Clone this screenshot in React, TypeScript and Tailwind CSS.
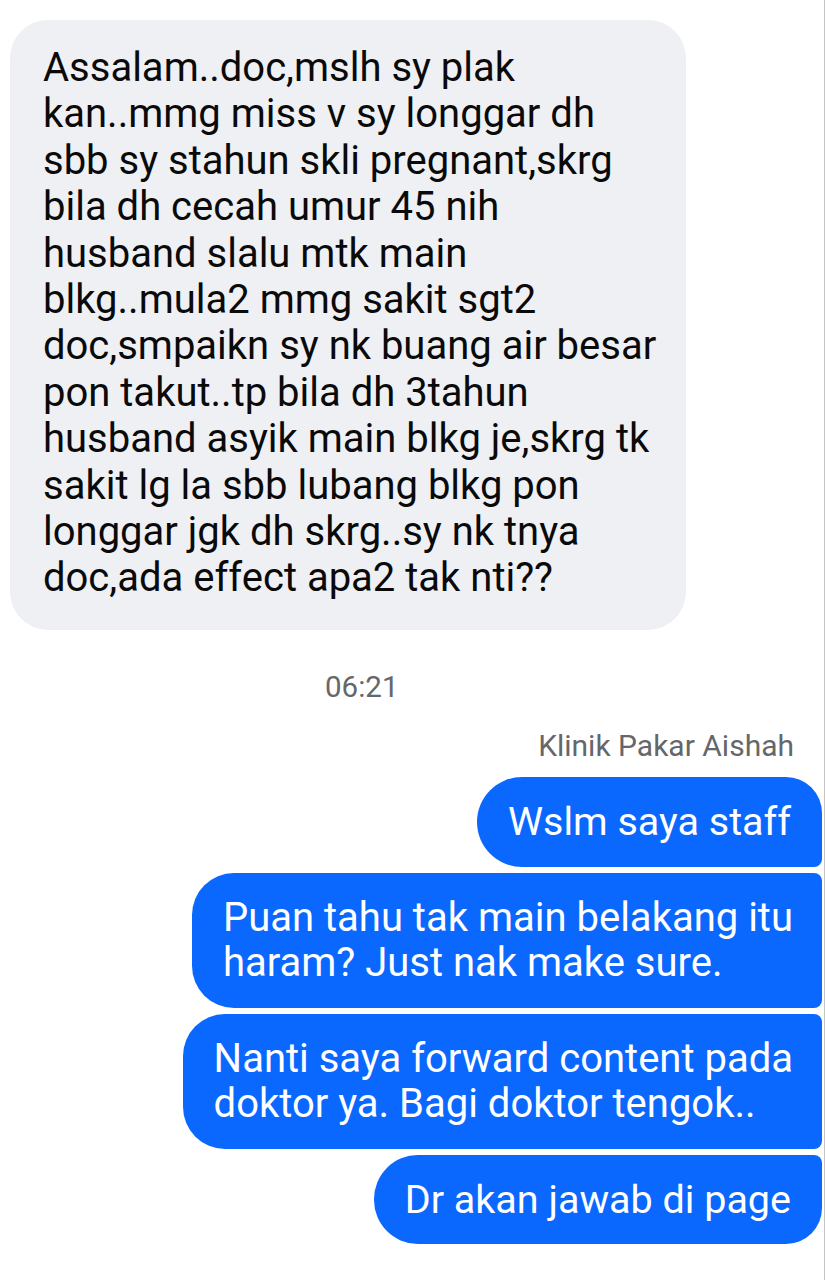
import React from "react";

const greyLines = [
  "Assalam..doc,mslh sy plak",
  "kan..mmg miss v sy longgar dh",
  "sbb sy stahun skli pregnant,skrg",
  "bila dh cecah umur 45 nih",
  "husband slalu mtk main",
  "blkg..mula2 mmg sakit sgt2",
  "doc,smpaikn sy nk buang air besar",
  "pon takut..tp bila dh 3tahun",
  "husband asyik main blkg je,skrg tk",
  "sakit lg la sbb lubang blkg pon",
  "longgar jgk dh skrg..sy nk tnya",
  "doc,ada effect apa2 tak nti??",
];

export default function App() {
  return (
    <div
      className="w-[825px] h-[1280px] bg-white overflow-hidden border-r border-[#c4c4c4] flex flex-col"
      style={{ fontFamily: "Roboto, 'Noto Sans', sans-serif" }}
    >
      <div className="pt-[20px] pl-[10px]">
        <div className="w-fit bg-[#eff0f4] rounded-[38px] pl-[33px] pr-[30px] pt-[25px] pb-[28px] text-[40px] leading-[46.4px] text-[#0a0a0a]">
          {greyLines.map((l, i) => (
            <div key={i} className="whitespace-nowrap">
              {l}
            </div>
          ))}
        </div>
      </div>

      <div className="mt-[41px] pl-[325px] text-[29.5px] leading-[32px] text-[#65676b]">06:21</div>

      <div className="mt-[27px] pr-[30px] text-right text-[30px] leading-[32px] text-[#65676b]">
        Klinik Pakar Aishah
      </div>

      <div className="mt-[15px] flex flex-col items-end gap-[6px] pr-[2px]">
        <div className="bg-[#0a68fe] text-white text-[39.5px] leading-[45px] py-[22.5px] pl-[31px] pr-[31px] rounded-l-[45px] rounded-tr-[36px] rounded-br-[8px] whitespace-nowrap">
          Wslm saya staff
        </div>
        <div className="bg-[#0a68fe] text-white text-[40px] leading-[45px] py-[22.5px] pl-[31px] pr-[29px] rounded-l-[42px] rounded-r-[8px] whitespace-nowrap">
          <div>Puan tahu tak main belakang itu</div>
          <div>haram? Just nak make sure.</div>
        </div>
        <div className="bg-[#0a68fe] text-white text-[40px] leading-[45px] py-[22.5px] pl-[31px] pr-[29px] rounded-l-[42px] rounded-r-[8px] whitespace-nowrap">
          <div>Nanti saya forward content pada</div>
          <div>doktor ya. Bagi doktor tengok..</div>
        </div>
        <div className="bg-[#0a68fe] text-white text-[39.5px] leading-[45px] py-[22px] pl-[31px] pr-[31px] rounded-l-[44px] rounded-tr-[8px] rounded-br-[36px] whitespace-nowrap">
          Dr akan jawab di page
        </div>
      </div>
    </div>
  );
}
